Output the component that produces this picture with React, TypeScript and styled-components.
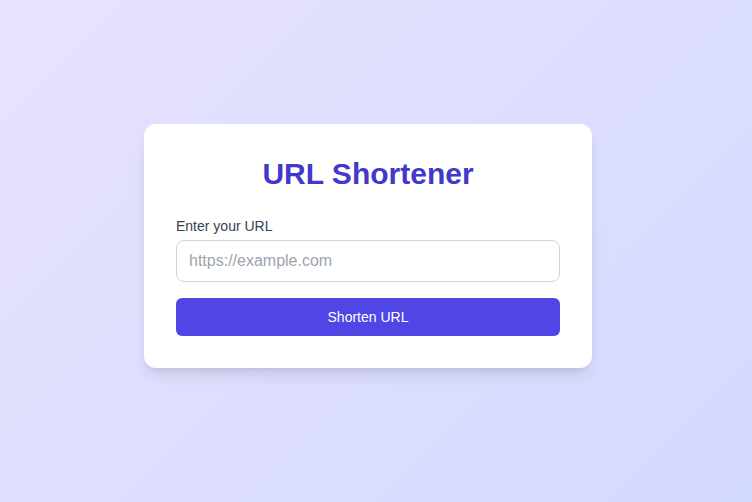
import React, { useState } from "react";
import styled, { createGlobalStyle } from "styled-components";

const Global = createGlobalStyle`
  html, body { margin: 0; padding: 0; }
  body { font-family: "Liberation Sans", Arial, sans-serif; }
  * { box-sizing: border-box; }
`;

const Page = styled.div`
  min-height: 502px;
  display: flex;
  align-items: center;
  justify-content: center;
  padding: 0 16px 11px 0;
  background: linear-gradient(135deg, #e7e2ff 0%, #d4dafe 100%);
`;

const Card = styled.div`
  width: 448px;
  background: #ffffff;
  border-radius: 12px;
  padding: 32px;
  box-shadow: 0 10px 15px -3px rgba(0, 0, 0, 0.1), 0 4px 6px -4px rgba(0, 0, 0, 0.1);
`;

const Title = styled.h1`
  margin: 0 0 24px;
  text-align: center;
  font-size: 30px;
  line-height: 36px;
  font-weight: 700;
  color: #4338ca;
`;

const Form = styled.form`
  display: flex;
  flex-direction: column;
`;

const Label = styled.label`
  font-size: 14px;
  line-height: 20px;
  color: #374151;
  margin-bottom: 4px;
`;

const Input = styled.input`
  width: 100%;
  height: 42px;
  padding: 8px 12px;
  font-family: inherit;
  font-size: 16px;
  line-height: 24px;
  color: #111827;
  border: 1px solid #d1d5db;
  border-radius: 8px;
  outline: none;
  margin-bottom: 16px;
  &::placeholder { color: #9ca3af; }
`;

const Button = styled.button`
  width: 100%;
  height: 38px;
  border: none;
  border-radius: 6px;
  background: #4f46e5;
  color: #ffffff;
  font-family: inherit;
  font-size: 14px;
  line-height: 20px;
  cursor: pointer;
`;

export default function App() {
  const [url, setUrl] = useState("");
  return (
    <Page>
      <Global />
      <Card>
        <Title>URL Shortener</Title>
        <Form onSubmit={(e) => e.preventDefault()}>
          <Label htmlFor="url">Enter your URL</Label>
          <Input
            id="url"
            type="url"
            placeholder="https://example.com"
            value={url}
            onChange={(e) => setUrl(e.target.value)}
          />
          <Button type="submit">Shorten URL</Button>
        </Form>
      </Card>
    </Page>
  );
}
